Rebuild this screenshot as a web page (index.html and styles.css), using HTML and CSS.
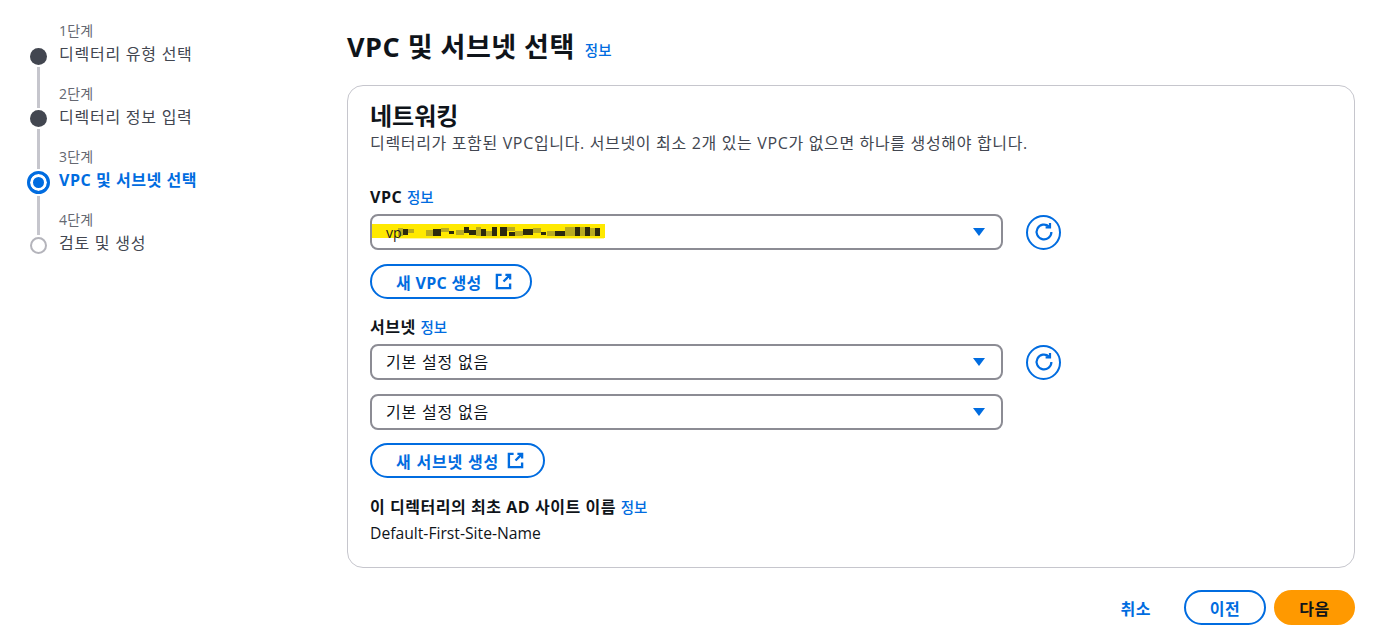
FILE: index.html
```html
<!DOCTYPE html>
<html lang="ko">
<head>
  <meta charset="UTF-8">
  <title>VPC 및 서브넷 선택</title>
  <link rel="stylesheet" href="styles.css">
</head>
<body>

<div class="page">
  <!-- 단계 표시 -->
  <nav class="wizard">
    <div class="rail">
      <span class="dot dot-done"></span>
      <span class="line"></span>
      <span class="dot dot-done"></span>
      <span class="line line-short"></span>
      <span class="dot dot-active"></span>
      <span class="line line-short"></span>
      <span class="dot dot-todo"></span>
    </div>
    <ul class="steps">
      <li class="step"><small>1단계</small><span>디렉터리 유형 선택</span></li>
      <li class="step"><small>2단계</small><span>디렉터리 정보 입력</span></li>
      <li class="step step-active"><small>3단계</small><span>VPC 및 서브넷 선택</span></li>
      <li class="step"><small>4단계</small><span>검토 및 생성</span></li>
    </ul>
  </nav>

  <main class="content">
    <div class="page-title">
      <h1>VPC 및 서브넷 선택</h1>
      <a class="info" href="#">정보</a>
    </div>

    <section class="card">
      <h2>네트워킹</h2>
      <p class="desc">디렉터리가 포함된 VPC입니다. 서브넷이 최소 2개 있는 VPC가 없으면 하나를 생성해야 합니다.</p>

      <div class="field field-vpc">
        <div class="label">VPC <a class="info" href="#">정보</a></div>
        <div class="select-row">
          <div class="select">
            <span class="select-value redacted">
              <svg class="smudge" width="234" height="16" viewBox="0 0 234 16">
                <rect x="0" y="0" width="233" height="14" fill="#ffe900"/>
                <rect x="26" y="14" width="206" height="1" fill="#fff6a0"/>
                <g fill="#b8aa20">
                  <rect x="26" y="4" width="5" height="8"/><rect x="36" y="5" width="6" height="4"/>
                  <rect x="54" y="6" width="7" height="6"/><rect x="69" y="4" width="8" height="4"/>
                  <rect x="84" y="6" width="8" height="5"/><rect x="104" y="3" width="5" height="9"/>
                  <rect x="114" y="7" width="6" height="5"/><rect x="135" y="3" width="8" height="4"/>
                  <rect x="143" y="7" width="8" height="5"/><rect x="161" y="4" width="8" height="5"/>
                  <rect x="175" y="7" width="8" height="5"/><rect x="193" y="3" width="10" height="9"/>
                  <rect x="208" y="3" width="5" height="9"/><rect x="218" y="4" width="5" height="8"/>
                </g>
                <g fill="#2c2a0c">
                  <rect x="31" y="5" width="5" height="6"/><rect x="61" y="5" width="8" height="7"/>
                  <rect x="77" y="7" width="5" height="3"/><rect x="92" y="3" width="5" height="6"/>
                  <rect x="97" y="6" width="7" height="5"/><rect x="109" y="5" width="5" height="7"/>
                  <rect x="120" y="3" width="5" height="9"/><rect x="128" y="3" width="7" height="9"/>
                  <rect x="137" y="8" width="6" height="4"/><rect x="151" y="5" width="10" height="6"/>
                  <rect x="169" y="8" width="5" height="3"/><rect x="183" y="7" width="10" height="5"/>
                  <rect x="203" y="3" width="5" height="9"/><rect x="213" y="3" width="5" height="9"/>
                  <rect x="223" y="4" width="5" height="8"/>
                </g>
              </svg>
              <span class="vp">vp</span>
            </span>
            <svg class="caret" width="14" height="10" viewBox="0 0 14 10"><path d="M1 1h12L7 9z"/></svg>
          </div>
          <button class="refresh" type="button">
            <svg width="20" height="20" viewBox="0 0 20 20" fill="none"><path d="M17.4 10a7.4 7.4 0 1 1-2.4-5.5"/><path d="M16 .9v4.4h-4.4"/></svg>
          </button>
        </div>
        <button class="btn btn-new btn-new-vpc" type="button">새 VPC 생성
          <svg width="17" height="17" viewBox="0 0 18 18" fill="none"><path d="M7 2H2v14h14v-5"/><path d="M11 2h5v5M16 2l-7 7"/></svg>
        </button>
      </div>

      <div class="field field-subnet">
        <div class="label">서브넷 <a class="info" href="#">정보</a></div>
        <div class="select-row">
          <div class="select">
            <span class="select-value">기본 설정 없음</span>
            <svg class="caret" width="14" height="10" viewBox="0 0 14 10"><path d="M1 1h12L7 9z"/></svg>
          </div>
          <button class="refresh" type="button">
            <svg width="20" height="20" viewBox="0 0 20 20" fill="none"><path d="M17.4 10a7.4 7.4 0 1 1-2.4-5.5"/><path d="M16 .9v4.4h-4.4"/></svg>
          </button>
        </div>
        <div class="select-row select-row-2">
          <div class="select">
            <span class="select-value">기본 설정 없음</span>
            <svg class="caret" width="14" height="10" viewBox="0 0 14 10"><path d="M1 1h12L7 9z"/></svg>
          </div>
        </div>
        <button class="btn btn-new" type="button">새 서브넷 생성
          <svg width="17" height="17" viewBox="0 0 18 18" fill="none"><path d="M7 2H2v14h14v-5"/><path d="M11 2h5v5M16 2l-7 7"/></svg>
        </button>
      </div>

      <div class="field field-site">
        <div class="label">이 디렉터리의 최초 AD 사이트 이름 <a class="info" href="#">정보</a></div>
        <div class="value">Default-First-Site-Name</div>
      </div>
    </section>

    <div class="actions">
      <a class="cancel" href="#">취소</a>
      <button class="btn btn-prev" type="button">이전</button>
      <button class="btn btn-next" type="button">다음</button>
    </div>
  </main>
</div>

</body>
</html>
```

FILE: styles.css
```css
* {
  margin: 0;
  padding: 0;
  box-sizing: border-box;
  font-family: "Open Sans", "Noto Sans CJK KR", sans-serif;
}
html, body {
  width: 100%;
  height: 100%;
  background: #fff;
  color: #0f141a;
  overflow: hidden;
  letter-spacing: 0.55px;
}
a {
  text-decoration: none;
  color: #006ce0;
}
button {
  background: none;
  cursor: pointer;
  letter-spacing: inherit;
}

.page {
  display: flex;
  align-items: flex-start;
  padding: 0 21px 0 27px;
}

/* 단계 표시 */
.wizard {
  width: 320px;
  flex: none;
  display: flex;
  gap: 9px;
}
.rail {
  width: 23px;
  padding-top: 48px;
  display: flex;
  flex-direction: column;
  align-items: center;
}
.dot {
  width: 17px;
  height: 17px;
  border-radius: 50%;
  flex: none;
}
.dot-done {
  background: #424650;
}
.dot-active {
  width: 23px;
  height: 23px;
  border: 3px solid #006ce0;
  background: #006ce0;
  box-shadow: inset 0 0 0 3px #fff;
}
.dot-todo {
  border: 2.5px solid #b4b4bb;
}
.line {
  width: 3px;
  height: 41px;
  background: #c6c6cd;
  margin: 2px 0;
}
.line-short {
  height: 39.5px;
}
.steps {
  list-style: none;
  padding-top: 20px;
}
.step {
  height: 63px;
  display: flex;
  flex-direction: column;
  color: #424650;
  font-size: 16px;
  line-height: 23px;
  letter-spacing: 0.75px;
}
.step span {
  margin-top: 1px;
}
.step small {
  font-size: 14px;
  line-height: 22px;
  color: #656871;
  letter-spacing: 0.2px;
}
.step-active span {
  color: #006ce0;
  font-weight: 700;
  letter-spacing: 0.55px;
}

/* 본문 */
.content {
  flex: 1;
  padding-top: 28px;
}
.page-title {
  display: flex;
  align-items: center;
  gap: 10px;
  height: 38px;
}
h1 {
  font-size: 27px;
  font-weight: 700;
  line-height: 38px;
  letter-spacing: 0.5px;
}
.info {
  font-size: 14.5px;
  font-weight: 500;
  letter-spacing: 0;
}
.page-title .info {
  margin-top: 4px;
}
.card {
  margin-top: 19px;
  height: 483px;
  border: 1px solid #c6c6cd;
  border-radius: 16px;
  padding: 13px 22px 0;
}
h2 {
  font-size: 24px;
  font-weight: 700;
  line-height: 33px;
  letter-spacing: 0;
}
.desc {
  font-size: 16px;
  line-height: 20px;
  color: #424650;
  margin-top: 1px;
  letter-spacing: 0.66px;
}

.field-vpc {
  margin-top: 33px;
}
.field-subnet {
  margin-top: 17px;
}
.field-site {
  margin-top: 18px;
}
.label {
  font-size: 16px;
  font-weight: 700;
  line-height: 22px;
}
.label .info {
  font-weight: 500;
}
.select-row {
  display: flex;
  align-items: center;
  gap: 23px;
  margin-top: 5px;
}
.select-row-2 {
  margin-top: 14px;
}
.select {
  width: 633px;
  height: 36px;
  border: 2px solid #8c8c94;
  border-radius: 8px;
  display: flex;
  align-items: center;
  justify-content: space-between;
  padding: 0 15px 0 14px;
  font-size: 16px;
  letter-spacing: 0.8px;
}
.select-value {
  line-height: 20px;
}
.redacted {
  display: flex;
  margin-left: -14px;
  height: 16px;
}
.smudge {
  display: block;
}
.vp {
  margin-left: -220px;
  line-height: 18px;
  font-size: 14px;
  letter-spacing: 0;
  color: #222;
}
.caret {
  fill: #006ce0;
}
.refresh {
  width: 35px;
  height: 35px;
  border: 2px solid #006ce0;
  border-radius: 50%;
  display: flex;
  align-items: center;
  justify-content: center;
}
.refresh svg {
  stroke: #006ce0;
  stroke-width: 2.2;
}

.btn {
  height: 35px;
  border-radius: 18px;
  font-size: 16px;
  font-weight: 700;
  display: inline-flex;
  align-items: center;
  justify-content: center;
}
.btn-new {
  margin-top: 14px;
  width: 175px;
  justify-content: flex-start;
  padding-left: 24px;
  gap: 8px;
  color: #006ce0;
  border: 2px solid #006ce0;
  letter-spacing: 0.8px;
}
.btn-new-vpc {
  width: 162px;
  gap: 13px;
  letter-spacing: 0.3px;
}
.select-row-2 + .btn-new {
  margin-top: 13px;
}
.btn-new svg {
  stroke: #006ce0;
  stroke-width: 2.5;
}
.value {
  font-size: 15.7px;
  letter-spacing: 0;
  line-height: 20px;
  margin-top: 4px;
}

.actions {
  display: flex;
  justify-content: flex-end;
  align-items: center;
  margin-top: 22px;
}
.cancel {
  font-size: 16px;
  font-weight: 700;
  margin-right: 33px;
}
.btn-prev {
  width: 82px;
  color: #006ce0;
  border: 2px solid #006ce0;
  margin-right: 8px;
}
.btn-next {
  width: 81px;
  background: #ff9900;
  border: none;
  color: #0f141a;
}
```
